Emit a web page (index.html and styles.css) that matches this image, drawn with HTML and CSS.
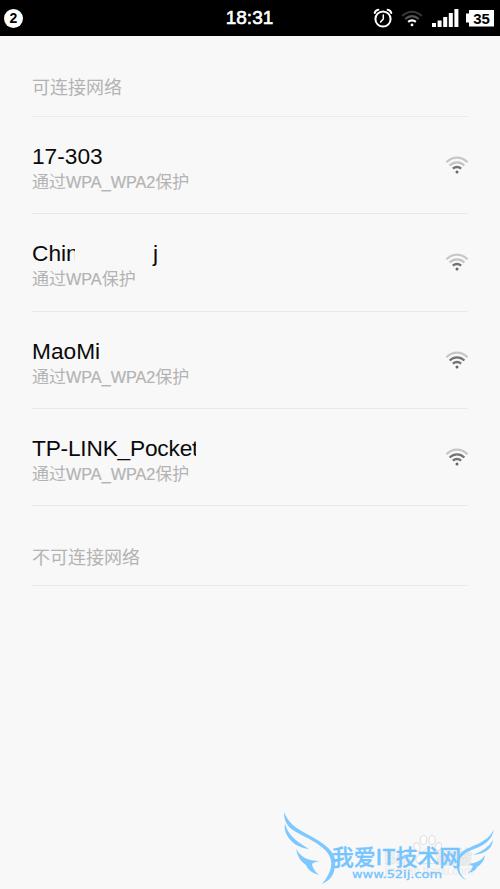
FILE: index.html
```html
<!DOCTYPE html>
<html lang="zh-CN">
<head>
<meta charset="utf-8">
<title>WLAN</title>
<link rel="stylesheet" href="styles.css">
</head>
<body>
<svg width="0" height="0" class="defs">
  <symbol id="wifi" viewBox="0 0 24 20">
    <g fill="none" stroke-width="2.3">
      <path class="outer" d="M1.4 7.3Q6.2 2.6 12 2.6T22.6 7.3"/>
      <path class="middle" d="M4.6 10.5Q8 7.4 12 7.4T19.4 10.5"/>
      <path class="inner" d="M7.8 13.7Q9.8 12 12 12T16.2 13.7"/>
    </g>
    <circle class="dot" cx="12" cy="17" r="1.5"/>
  </symbol>
</svg>
<header class="status">
  <span class="count">2</span>
  <time class="clock">18:31</time>
  <div class="icons">
    <svg class="alarm" width="20" height="20" viewBox="0 0 20 20" fill="none" stroke="#fff" stroke-width="2" stroke-linecap="round">
      <circle cx="10" cy="11" r="7.6"/>
      <path d="M10.3 7V11L7.6 14" stroke-width="1.5"/>
      <path d="M1.7 5Q2.4 2 5.4 1.7M18.3 5Q17.6 2 14.6 1.7"/>
    </svg>
    <svg class="status-wifi" width="22" height="19"><use href="#wifi"/></svg>
    <svg class="signal" width="27" height="18" fill="#fff"><path d="M0 14h4v4H0zM5.6 11.5h4V18h-4zM11.2 8h4v10h-4zM16.8 4h4v14h-4zM22.4 0h4v18h-4z"/></svg>
    <div class="battery">35</div>
  </div>
</header>
<main>
  <h2 class="heading">可连接网络</h2>
  <ul class="list">
    <li class="row"><div><div class="name">17-303</div><div class="sub">通过<span class="latin">WPA_WPA2</span>保护</div></div><svg class="wifi weak" width="24" height="20"><use href="#wifi"/></svg></li>
    <li class="row"><div><div class="name masked"><span class="start">Chin</span><span>j</span></div><div class="sub">通过<span class="latin">WPA</span>保护</div></div><svg class="wifi weak" width="24" height="20"><use href="#wifi"/></svg></li>
    <li class="row"><div><div class="name">MaoMi</div><div class="sub">通过<span class="latin">WPA_WPA2</span>保护</div></div><svg class="wifi" width="24" height="20"><use href="#wifi"/></svg></li>
    <li class="row"><div><div class="name clipped">TP-LINK_Pocket</div><div class="sub">通过<span class="latin">WPA_WPA2</span>保护</div></div><svg class="wifi" width="24" height="20"><use href="#wifi"/></svg></li>
  </ul>
  <h2 class="heading last">不可连接网络</h2>
</main>
<svg class="watermark" width="230" height="89" viewBox="0 0 230 89">
  <text class="faint-main" x="114" y="64" textLength="27" lengthAdjust="spacingAndGlyphs">Bai</text>
  <text class="faint-main" x="168" y="64" textLength="34" lengthAdjust="spacingAndGlyphs">经验</text>
  <text class="faint-url" x="115" y="75" textLength="88" lengthAdjust="spacingAndGlyphs">jingyan.baidu.com</text>
  <g fill="#fcfcfc" stroke="#dedede" stroke-width="1">
    <ellipse cx="147" cy="47" rx="3" ry="4.2" transform="rotate(-20 147 47)"/><ellipse cx="153.500" cy="40" rx="3.200" ry="4.500"/><ellipse cx="162" cy="40" rx="3.200" ry="4.500"/><ellipse cx="168.500" cy="46.500" rx="3" ry="4.200" transform="rotate(20 168 46)"/>
    <path d="M158 47Q162 47 165 53T168 62Q164 65 158 63Q151 65 147 62T151 53T158 47Z"/>
  </g>
  <g fill="#7cc8ff">
    <path d="M14 12C20 27 31 30 44 38C60 47 67 55 65 66C64 76 60 80 52 84C61 73 65 62 57 52C49 43 37 38 26 32C17 27 14 21 14 12Z"/>
    <path d="M15 24C19 37 28 42 39 49C29 48 22 43 18 37C15 32 14 29 15 24Z"/>
    <path d="M26 49C31 57 37 61 50 61Q44 62 42 64Q43 70 49 75Q38 72 36 65Q28 60 26 49Z"/>
    <path d="M224 29C222 40 215 45 204 49C194 53 188 57 189 66Q189 75 196 80C185 75 185 61 190 54C198 45 217 45 224 29Z"/>
    <path d="M223 40C222 50 213 54 203 55Q217 50 223 40Z"/>
    <path d="M215 55Q210 63 199 64L203 66Q202 70 198 73Q206 71 207 67Q214 63 215 55Z"/>
  </g>
  <text class="logo" x="62" y="64.500" textLength="129" lengthAdjust="spacingAndGlyphs">我爱IT技术网</text>
  <text class="url" x="82" y="77.500" textLength="90" lengthAdjust="spacingAndGlyphs">www.52ij.com</text>
</svg>
</body>
</html>
```
FILE: styles.css
```css
* { box-sizing: border-box; }
body {
  margin: 0;
  height: 889px;
  overflow: hidden;
  background: #f8f8f8;
  font-family: "Liberation Sans", "Noto Sans CJK SC", sans-serif;
}
svg { flex: none; }
.defs { display: block; height: 0; }
.status {
  display: grid;
  grid-template-columns: 1fr auto 1fr;
  align-items: center;
  height: 36px;
  padding: 0 6px 0 4px;
  background: #000;
  color: #fff;
}
.count {
  width: 19px;
  height: 19px;
  border-radius: 50%;
  background: #fff;
  color: #000;
  font: bold 14px/19px "Liberation Sans", sans-serif;
  text-align: center;
}
.clock { font-size: 19px; line-height: 36px; padding-left: 1px; -webkit-text-stroke: .6px #fff; }
.icons { display: flex; justify-content: flex-end; align-items: center; }
.alarm { margin-right: 8px; }
.status-wifi { --out: #383838; --mid: #555; --in: #fff; margin-right: 9px; }
.signal { margin-right: 7px; }
.battery {
  display: flex;
  align-items: center;
  justify-content: center;
  width: 28px;
  height: 17px;
  padding-left: 3px;
  background: #fff;
  clip-path: polygon(3px 0, 100% 0, 100% 100%, 3px 100%, 3px 13px, 0 13px, 0 4px, 3px 4px);
  color: #000;
  font: bold 15px/17px "Liberation Sans", sans-serif;
}
main { padding: 0 32px; }
.heading {
  margin: 0;
  height: 81px;
  padding-top: 24px;
  border-bottom: 1px solid #ebebeb;
  color: #b3b3b3;
  font-size: 18px;
  font-weight: 400;
  line-height: 56px;
}
.last { height: 80px; }
.list { margin: 0; padding: 0; list-style: none; }
.row {
  display: flex;
  justify-content: space-between;
  height: 97.25px;
  padding-top: 26px;
  border-bottom: 1px solid #e9e9e9;
}
.name { height: 26px; color: #0a0a0a; font-size: 22.7px; line-height: 27px; white-space: nowrap; }
.masked { display: flex; width: 126px; justify-content: space-between; }
.start { width: 43px; overflow: hidden; }
.clipped { width: 164px; overflow: hidden; letter-spacing: -.2px; }
.sub { height: 26px; color: #b3b3b3; font-size: 17px; line-height: 26px; white-space: nowrap; }
.latin { font-size: 16.2px; -webkit-text-stroke: .2px #b3b3b3; }
.wifi { margin: 12px -1px 0 0; }
.weak { --mid: #c4c4c4; }
.outer { stroke: var(--out, #c7c7c7); }
.middle { stroke: var(--mid, #737373); }
.inner { stroke: var(--in, #737373); }
.dot { fill: var(--in, #666); }
.watermark { position: absolute; left: 270px; top: 800px; }
.faint-main { fill: #f5f5f5; stroke: #e2e2e2; stroke-width: .8px; font: bold 18px "Noto Sans CJK SC", sans-serif; }
.faint-url { fill: #e9e9e9; font-size: 12px; }
.logo { fill: #74c4ff; font: 500 21.5px "Noto Sans CJK SC", sans-serif; stroke: #74c4ff; stroke-width: .3px; }
.url { fill: #74c4ff; stroke: #74c4ff; stroke-width: .3px; font: 11px "DejaVu Sans", sans-serif; }
```
